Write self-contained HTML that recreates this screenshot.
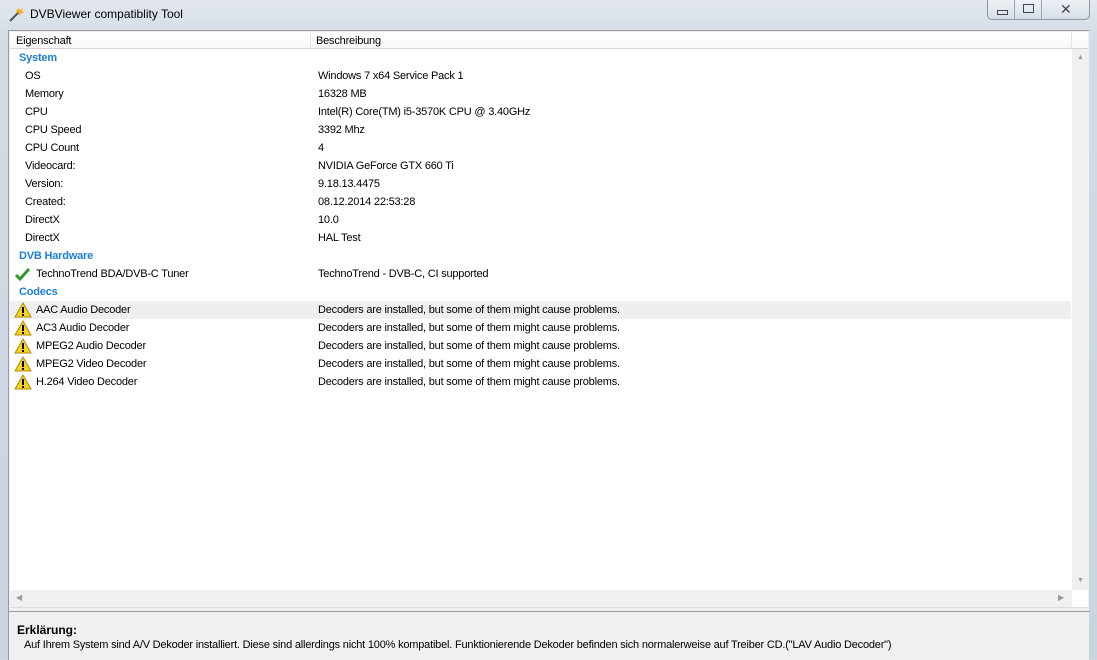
<!DOCTYPE html>
<html><head><style>
body{margin:0;width:1097px;height:659px;background:#cfd8e3;font-family:"Liberation Sans",Tahoma,sans-serif;font-size:11px;letter-spacing:-0.2px;color:#000;position:relative;overflow:hidden}
.frame{position:absolute;left:0;top:0;width:1097px;height:659px;background:linear-gradient(#e3e8ee,#d3dbe4 40px,#cad4df);}
.title{position:absolute;left:30px;top:7px;font-size:12px;color:#000;letter-spacing:0}
.btns{position:absolute;left:987px;top:0;width:101px;height:19px;border:1px solid #8a96a6;border-top:none;border-radius:0 0 5px 5px;background:linear-gradient(#eef2f6,#d7dee7)}
.btns div{position:absolute;top:0;height:19px;border-right:1px solid #9aa6b4}
.client{position:absolute;left:8px;top:30px;width:1080px;height:629px;background:#f0f0f0;border-left:1px solid #999;border-top:1px solid #999}
.list{position:absolute;left:1px;top:1px;width:1078px;height:575px;background:#fff;border-bottom:1px solid #ddd}
.hdr{position:absolute;left:0;top:0;width:1078px;height:16px;border-bottom:1px solid #d5d5d5;background:linear-gradient(#fff,#f7f8fa)}
.hdr span{position:absolute;top:3px}
.row{position:absolute;left:0;width:1061px;height:18px;line-height:18px}
.row .a{position:absolute;left:15px}
.row .b{position:absolute;left:308px}
.grp{position:absolute;left:9px;color:#1c7fcf;font-weight:bold;font-size:11px;height:18px;line-height:18px}
.vs{position:absolute;left:1062px;top:17px;width:16px;height:541px;background:#f0f0f0}
.hs{position:absolute;left:0;top:558px;width:1062px;height:17px;background:#f0f0f0}
.sep{position:absolute;left:0;top:580px;width:1081px;height:1px;background:#999}
.warn{position:absolute;left:4px;top:1px}
</style></head><body>
<div class="frame"></div>
<svg style="position:absolute;left:8px;top:5px" width="18" height="18"><path d="M2 16L11 7" stroke="#555" stroke-width="2"/><path d="M10 3l2 2 3-2-1 3 2 2-3 0-1 3-1-3-3-1z" fill="#f2b21c"/></svg>
<div class="title">DVBViewer compatiblity Tool</div>
<div class="btns"><div style="left:0;width:26px"></div><div style="left:27px;width:26px"></div>
<span style="position:absolute;left:9px;top:10px;width:9px;height:3px;border:1px solid #445"></span>
<span style="position:absolute;left:35px;top:4px;width:9px;height:7px;border:1px solid #445"></span>
<span style="position:absolute;left:72px;top:1px;font-size:14px;color:#445">✕</span></div>
<div class="client">
<div class="list">
<div class="hdr"><span style="left:6px">Eigenschaft</span><span style="left:306px">Beschreibung</span><span style="position:absolute;left:300px;top:0;width:1px;height:16px;background:#e5e5e5"></span><span style="position:absolute;left:1061px;top:0;width:1px;height:16px;background:#e5e5e5"></span></div>
<div class="grp" style="top:17px">System</div>
<div class="row" style="top:35px"><span class="a">OS</span><span class="b">Windows 7 x64 Service Pack 1</span></div>
<div class="row" style="top:53px"><span class="a">Memory</span><span class="b">16328 MB</span></div>
<div class="row" style="top:71px"><span class="a">CPU</span><span class="b">Intel(R) Core(TM) i5-3570K CPU @ 3.40GHz</span></div>
<div class="row" style="top:89px"><span class="a">CPU Speed</span><span class="b">3392 Mhz</span></div>
<div class="row" style="top:107px"><span class="a">CPU Count</span><span class="b">4</span></div>
<div class="row" style="top:125px"><span class="a">Videocard:</span><span class="b">NVIDIA GeForce GTX 660 Ti</span></div>
<div class="row" style="top:143px"><span class="a">Version:</span><span class="b">9.18.13.4475</span></div>
<div class="row" style="top:161px"><span class="a">Created:</span><span class="b">08.12.2014 22:53:28</span></div>
<div class="row" style="top:179px"><span class="a">DirectX</span><span class="b">10.0</span></div>
<div class="row" style="top:197px"><span class="a">DirectX</span><span class="b">HAL Test</span></div>
<div class="grp" style="top:215px">DVB Hardware</div>
<div class="row" style="top:233px"><svg class="warn" width="18" height="16"><path d="M2 9l4 4 9-10" stroke="#2f9a2a" stroke-width="3" fill="none"/></svg><span class="a" style="left:26px">TechnoTrend BDA/DVB-C Tuner</span><span class="b">TechnoTrend - DVB-C, CI supported</span></div>
<div class="grp" style="top:251px">Codecs</div>
<div class="row" style="top:269px;background:#efefef"><svg class="warn" width="18" height="16"><path d="M9 1L17 15H1z" fill="#f6d31c" stroke="#b08a10"/><rect x="8" y="5" width="2" height="6"/><rect x="8" y="12" width="2" height="2"/></svg><span class="a" style="left:26px">AAC Audio Decoder</span><span class="b">Decoders are installed, but some of them might cause problems.</span></div>
<div class="row" style="top:287px"><svg class="warn" width="18" height="16"><path d="M9 1L17 15H1z" fill="#f6d31c" stroke="#b08a10"/><rect x="8" y="5" width="2" height="6"/><rect x="8" y="12" width="2" height="2"/></svg><span class="a" style="left:26px">AC3 Audio Decoder</span><span class="b">Decoders are installed, but some of them might cause problems.</span></div>
<div class="row" style="top:305px"><svg class="warn" width="18" height="16"><path d="M9 1L17 15H1z" fill="#f6d31c" stroke="#b08a10"/><rect x="8" y="5" width="2" height="6"/><rect x="8" y="12" width="2" height="2"/></svg><span class="a" style="left:26px">MPEG2 Audio Decoder</span><span class="b">Decoders are installed, but some of them might cause problems.</span></div>
<div class="row" style="top:323px"><svg class="warn" width="18" height="16"><path d="M9 1L17 15H1z" fill="#f6d31c" stroke="#b08a10"/><rect x="8" y="5" width="2" height="6"/><rect x="8" y="12" width="2" height="2"/></svg><span class="a" style="left:26px">MPEG2 Video Decoder</span><span class="b">Decoders are installed, but some of them might cause problems.</span></div>
<div class="row" style="top:341px"><svg class="warn" width="18" height="16"><path d="M9 1L17 15H1z" fill="#f6d31c" stroke="#b08a10"/><rect x="8" y="5" width="2" height="6"/><rect x="8" y="12" width="2" height="2"/></svg><span class="a" style="left:26px">H.264 Video Decoder</span><span class="b">Decoders are installed, but some of them might cause problems.</span></div>
<div class="vs"><span style="position:absolute;left:5px;top:5px;font-size:7px;color:#999">▲</span><span style="position:absolute;left:5px;top:528px;font-size:7px;color:#999">▼</span></div>
<div class="hs"><span style="position:absolute;left:6px;top:3px;font-size:8px;color:#999">◀</span><span style="position:absolute;left:1048px;top:3px;font-size:8px;color:#999">▶</span></div>
</div>
<div class="sep"></div>
<div style="position:absolute;left:8px;top:592px;font-weight:bold;font-size:12px;letter-spacing:0">Erklärung:</div>
<div style="position:absolute;left:15px;top:608px">Auf Ihrem System sind A/V Dekoder installiert. Diese sind allerdings nicht 100% kompatibel. Funktionierende Dekoder befinden sich normalerweise auf Treiber CD.("LAV Audio Decoder")</div>
</div>
</body></html>
